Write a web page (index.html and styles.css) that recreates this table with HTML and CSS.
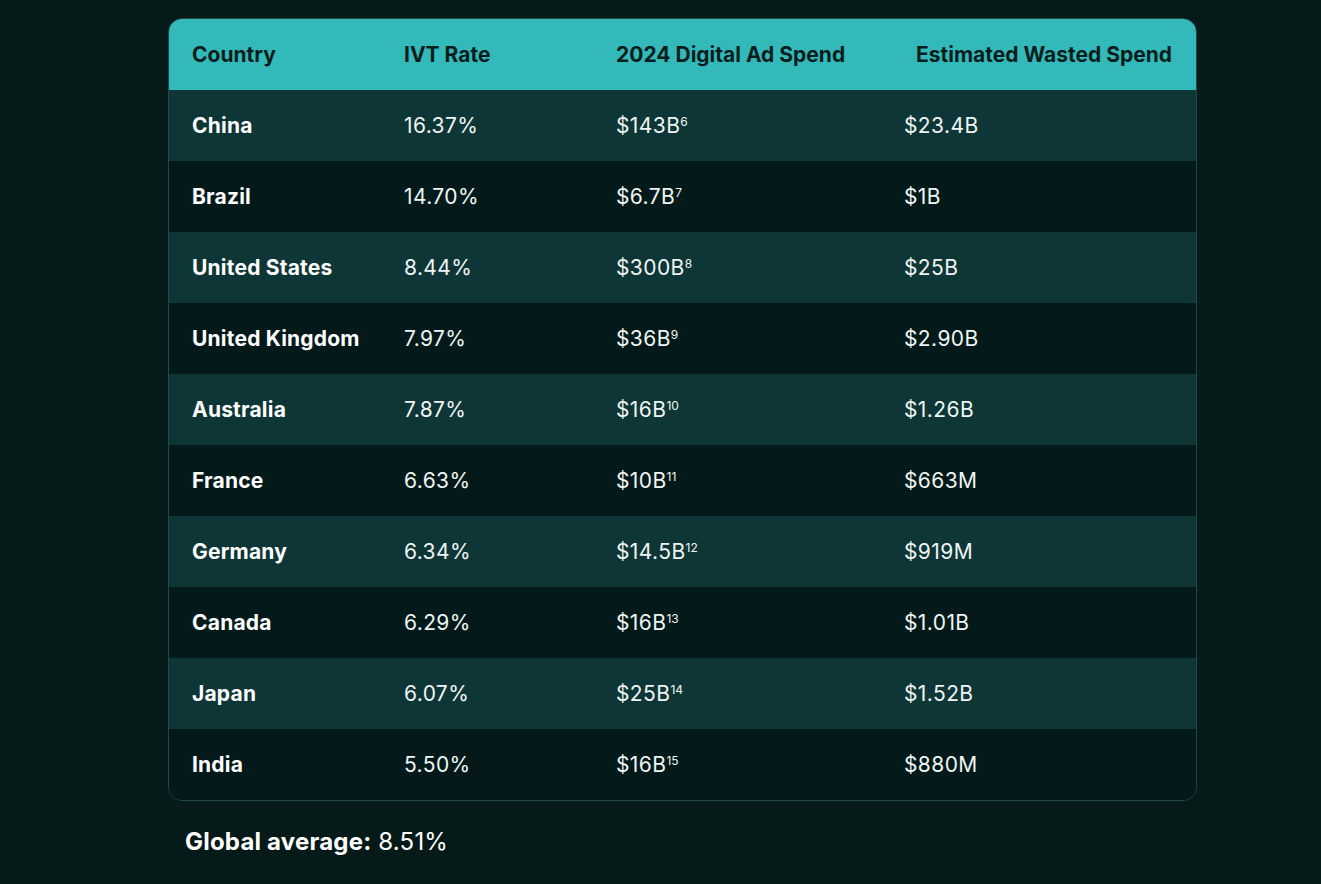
FILE: index.html
```html
<!DOCTYPE html>
<html lang="en">
<head>
<meta charset="utf-8">
<title>IVT Rates by Country</title>
<link rel="stylesheet" href="styles.css">
</head>
<body>
<main class="page">
  <div class="card">
    <table class="ivt">
      <colgroup>
        <col class="c1"><col class="c2"><col class="c3"><col class="c4">
      </colgroup>
      <thead>
        <tr>
          <th>Country</th>
          <th>IVT Rate</th>
          <th>2024 Digital Ad Spend</th>
          <th class="last">Estimated Wasted Spend</th>
        </tr>
      </thead>
      <tbody>
        <tr><td class="name">China</td><td>16.37%</td><td>$143B<sup>6</sup></td><td>$23.4B</td></tr>
        <tr><td class="name">Brazil</td><td>14.70%</td><td>$6.7B<sup>7</sup></td><td>$1B</td></tr>
        <tr><td class="name">United States</td><td>8.44%</td><td>$300B<sup>8</sup></td><td>$25B</td></tr>
        <tr><td class="name">United Kingdom</td><td>7.97%</td><td>$36B<sup>9</sup></td><td>$2.90B</td></tr>
        <tr><td class="name">Australia</td><td>7.87%</td><td>$16B<sup>10</sup></td><td>$1.26B</td></tr>
        <tr><td class="name">France</td><td>6.63%</td><td>$10B<sup>11</sup></td><td>$663M</td></tr>
        <tr><td class="name">Germany</td><td>6.34%</td><td>$14.5B<sup>12</sup></td><td>$919M</td></tr>
        <tr><td class="name">Canada</td><td>6.29%</td><td>$16B<sup>13</sup></td><td>$1.01B</td></tr>
        <tr><td class="name">Japan</td><td>6.07%</td><td>$25B<sup>14</sup></td><td>$1.52B</td></tr>
        <tr><td class="name">India</td><td>5.50%</td><td>$16B<sup>15</sup></td><td>$880M</td></tr>
      </tbody>
    </table>
  </div>
  <p class="avg"><strong>Global average:</strong> 8.51%</p>
</main>
</body>
</html>
```
FILE: styles.css
```css
html, body {
  margin: 0;
  padding: 0;
  background: #051a19;
}
body {
  font-family: Inter, "Noto Sans", sans-serif;
  color: #f2f7f6;
}
.page {
  padding: 18px 0 0 168px;
}
.card {
  width: 1027px;
  border: 1px solid #1f4a46;
  border-radius: 14px;
  overflow: hidden;
  background: #041a1a;
}
.ivt {
  width: 100%;
  border-collapse: collapse;
  table-layout: fixed;
}
.c1 { width: 212px; }
.c2 { width: 212px; }
.c3 { width: 288px; }
.c4 { width: auto; }
.ivt th {
  background: #33b9b9;
  color: #061d1c;
  font-weight: 700;
  font-size: 21px;
  text-align: left;
  height: 71px;
  padding: 0 0 0 23px;
  letter-spacing: 0;
  white-space: nowrap;
}
.ivt th.last {
  padding-left: 35px;
}
.ivt td {
  height: 71px;
  padding: 0 0 0 23px;
  font-size: 21px;
  font-weight: 400;
  letter-spacing: 0.4px;
  color: #eef5f4;
}
.ivt td.name {
  font-weight: 700;
  letter-spacing: 0.2px;
  color: #ffffff;
}
.ivt tbody tr:nth-child(odd) td {
  background: #0f3636;
}
.ivt tbody tr:nth-child(even) td {
  background: #041a1a;
}
.ivt sup {
  font-size: 12px;
  line-height: 0;
  vertical-align: 7px;
  letter-spacing: 0;
}
.avg {
  margin: 26px 0 0 17px;
  font-size: 24px;
  color: #ffffff;
  letter-spacing: 0.2px;
}
.avg strong {
  font-weight: 700;
}
```
